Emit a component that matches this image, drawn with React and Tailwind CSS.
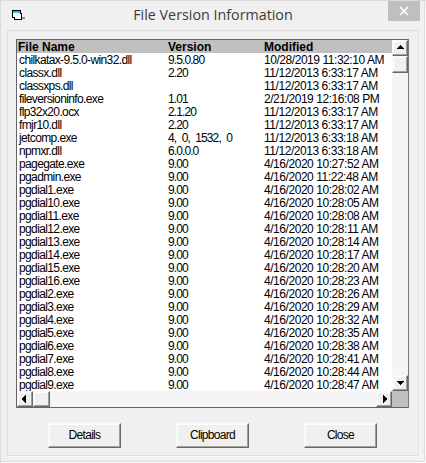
const rows = [
  ["chilkatax-9.5.0-win32.dll", "9.5.0.80", "10/28/2019 11:32:10 AM"],
  ["classx.dll", "2.20", "11/12/2013 6:33:17 AM"],
  ["classxps.dll", "", "11/12/2013 6:33:17 AM"],
  ["fileversioninfo.exe", "1.01", "2/21/2019 12:16:08 PM"],
  ["flp32x20.ocx", "2.1.20", "11/12/2013 6:33:17 AM"],
  ["fmjr10.dll", "2.20", "11/12/2013 6:33:17 AM"],
  ["jetcomp.exe", "4, 0, 1532, 0", "11/12/2013 6:33:18 AM"],
  ["npmxr.dll", "6.0.0.0", "11/12/2013 6:33:18 AM"],
  ["pagegate.exe", "9.00", "4/16/2020 10:27:52 AM"],
  ["pgadmin.exe", "9.00", "4/16/2020 11:22:48 AM"],
  ["pgdial1.exe", "9.00", "4/16/2020 10:28:02 AM"],
  ["pgdial10.exe", "9.00", "4/16/2020 10:28:05 AM"],
  ["pgdial11.exe", "9.00", "4/16/2020 10:28:08 AM"],
  ["pgdial12.exe", "9.00", "4/16/2020 10:28:11 AM"],
  ["pgdial13.exe", "9.00", "4/16/2020 10:28:14 AM"],
  ["pgdial14.exe", "9.00", "4/16/2020 10:28:17 AM"],
  ["pgdial15.exe", "9.00", "4/16/2020 10:28:20 AM"],
  ["pgdial16.exe", "9.00", "4/16/2020 10:28:23 AM"],
  ["pgdial2.exe", "9.00", "4/16/2020 10:28:26 AM"],
  ["pgdial3.exe", "9.00", "4/16/2020 10:28:29 AM"],
  ["pgdial4.exe", "9.00", "4/16/2020 10:28:32 AM"],
  ["pgdial5.exe", "9.00", "4/16/2020 10:28:35 AM"],
  ["pgdial6.exe", "9.00", "4/16/2020 10:28:38 AM"],
  ["pgdial7.exe", "9.00", "4/16/2020 10:28:41 AM"],
  ["pgdial8.exe", "9.00", "4/16/2020 10:28:44 AM"],
  ["pgdial9.exe", "9.00", "4/16/2020 10:28:47 AM"],
];

const raised = "bg-[#f0f0f0] border border-[#f8f8f8] border-r-[#696969] border-b-[#696969] shadow-[inset_-1px_-1px_0_#a0a0a0,inset_1px_1px_0_#ffffff]";
const track = "bg-[#f5f5f5] bg-[radial-gradient(#d8d8d8_0.5px,transparent_0.6px)] bg-[length:2px_2px]";

function Arrow({ dir }) {
  const d = {
    up: "M0 5 L8 5 L4 1 Z",
    down: "M0 2 L8 2 L4 6 Z",
    left: "M4.5 0 L4.5 8 L0.5 4 Z",
    right: "M3 0 L3 8 L7 4 Z",
  }[dir];
  if (!d) return null;
  return (
    <svg width="8" height="8" viewBox="0 0 8 8" shapeRendering="crispEdges">
      <path d={d} fill="#000" />
    </svg>
  );
}

function SBtn({ dir, className = "" }) {
  return (
    <div className={`flex items-center justify-center shrink-0 ${raised} ${className}`}>
      <Arrow dir={dir} />
    </div>
  );
}

function Btn({ children }) {
  return (
    <button className={`w-[73px] h-[25px] pb-[1px] text-[12px] tracking-[-0.7px] text-black flex items-center justify-center ${raised} border-r-[#585858] border-b-[#585858]`}>
      {children}
    </button>
  );
}

export default function App() {
  return (
    <div className="w-[426px] h-[463px] bg-[#f0f0f0] border border-[#dcdcdc] border-r-[#fafafa] border-b-[#fafafa] shadow-[inset_-1px_-1px_0_#dcdcdc] flex flex-col overflow-hidden font-['Liberation_Sans',sans-serif]">
      <div className="h-[29px] shrink-0 flex items-start relative">
        <svg className="absolute left-[11px] top-[9px]" width="16" height="14" viewBox="0 0 16 14" shapeRendering="crispEdges">
          <path d="M0.5 0.5 H8.5 V3.5 H9.5 V9.5 H2.5 V7.5 H0.5 Z" fill="#fff" stroke="#000" />
          <path d="M1 1 H8 V3 H1 Z" fill="#19c8e8" />
          <path d="M10 7 H13 V9 H10 Z" fill="#8c8c8c" />
        </svg>
        <div className="flex-1 text-center pt-[4px] text-[14.3px] leading-[20px] text-[#3c3c3c] font-['Open_Sans',sans-serif]">
          File Version Information
        </div>
        <div className="absolute right-[5px] top-0 w-[32px] h-[20px] bg-[#bfbfbf] flex items-center justify-center">
          <svg width="10" height="10" viewBox="0 0 10 10">
            <path d="M1 1 L9 9 M9 1 L1 9" stroke="#fff" strokeWidth="1.6" />
          </svg>
        </div>
      </div>

      <div className="ml-[6px] mr-[6px] mb-[6px] flex-1 border border-[#dedede] shadow-[1px_1px_0_#fafafa] pt-[8px] px-[8px] flex flex-col">
        <div className="w-[393px] h-[369px] border border-[#646464] border-r-[#7a7a7a] bg-white flex flex-col">
          <div className="flex flex-1 min-h-0">
            <div className="flex-1 min-w-0 overflow-hidden">
              <div className="h-[13px] bg-[#c0c0c0] flex items-center text-[12px] font-bold text-black">
                <span className="w-[151px] pl-[1px]">File Name</span>
                <span className="w-[96px] shrink-0">Version</span>
                <span>Modified</span>
              </div>
              {rows.map((r) => (
                <div key={r[0]} className="h-[13px] flex items-start text-[12px] leading-[15px] text-black whitespace-nowrap">
                  <span className="w-[151px] pl-[2px] tracking-[-0.62px]">{r[0]}</span>
                  <span className="w-[96px] shrink-0 tracking-[-0.9px] [word-spacing:3px]">{r[1]}</span>
                  <span className="tracking-[-0.45px]">{r[2]}</span>
                </div>
              ))}
            </div>
            <div className={`w-[16px] shrink-0 flex flex-col ${track}`}>
              <SBtn dir="up" className="h-[16px]" />
              <SBtn dir="none" className="h-[17px]" />
              <div className="flex-1" />
              <SBtn dir="down" className="h-[16px]" />
            </div>
          </div>
          <div className="h-[16px] shrink-0 flex">
            <SBtn dir="left" className="w-[16px]" />
            <SBtn dir="none" className="w-[17px]" />
            <div className={`flex-1 ${track}`} />
            <SBtn dir="right" className="w-[16px]" />
            <div className="w-[16px] shrink-0 bg-[#c0c0c0]" />
          </div>
        </div>
        <div className="mt-[15px] pl-[32px] flex gap-[55px]">
          <Btn>Details</Btn>
          <Btn>Clipboard</Btn>
          <Btn>Close</Btn>
        </div>
      </div>
    </div>
  );
}
